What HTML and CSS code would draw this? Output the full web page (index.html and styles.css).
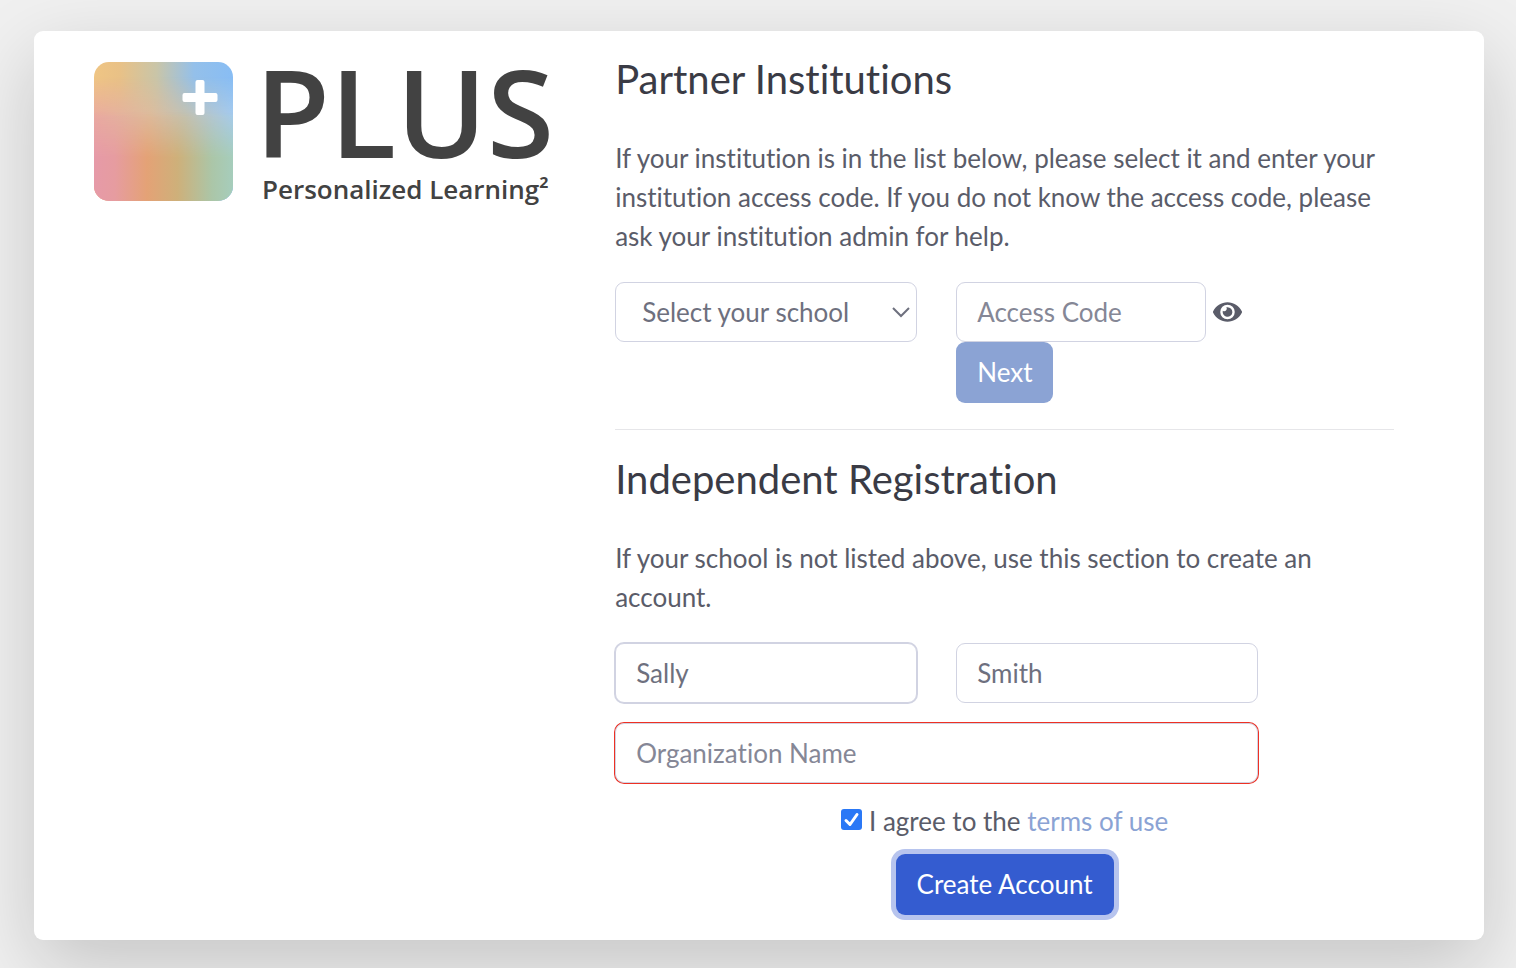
FILE: index.html
```html
<!DOCTYPE html>
<html lang="en">
<head>
<meta charset="utf-8">
<meta name="viewport" content="width=device-width, initial-scale=1">
<title>PLUS – Create Account</title>
<link rel="stylesheet" href="styles.css">
</head>
<body>
<main class="card">
  <div class="brand">
    <svg class="brand-mark" viewBox="0 0 139 139" role="img" aria-label="PLUS logo">
      <defs>
        <linearGradient id="top">
          <stop offset="0" stop-color="#efc584"/>
          <stop offset=".18" stop-color="#e9c186"/>
          <stop offset=".45" stop-color="#c9c5a8"/>
          <stop offset=".72" stop-color="#94c0ea"/>
          <stop offset="1" stop-color="#88bdf4"/>
        </linearGradient>
        <linearGradient id="middle">
          <stop offset="0" stop-color="#eaaaa0"/>
          <stop offset=".4" stop-color="#debb9c"/>
          <stop offset=".65" stop-color="#c5c2b0"/>
          <stop offset="1" stop-color="#a6cbee"/>
        </linearGradient>
        <linearGradient id="bottom">
          <stop offset="0" stop-color="#e69aa8"/>
          <stop offset=".15" stop-color="#e69ca0"/>
          <stop offset=".38" stop-color="#e4a276"/>
          <stop offset=".6" stop-color="#ceb07a"/>
          <stop offset=".85" stop-color="#abc6a8"/>
          <stop offset="1" stop-color="#a6cdbc"/>
        </linearGradient>
        <linearGradient id="fade" x2="0" y2="1">
          <stop offset="0" stop-color="#fff" stop-opacity="0"/>
          <stop offset="1" stop-color="#fff"/>
        </linearGradient>
        <mask id="upper"><rect y="15" width="139" height="40" fill="url(#fade)"/><rect y="55" width="139" height="84" fill="#fff"/></mask>
        <mask id="lower"><rect y="50" width="139" height="45" fill="url(#fade)"/><rect y="95" width="139" height="44" fill="#fff"/></mask>
      </defs>
      <rect width="139" height="139" rx="15" fill="url(#top)"/>
      <rect width="139" height="139" rx="15" fill="url(#middle)" mask="url(#upper)"/>
      <rect width="139" height="139" rx="15" fill="url(#bottom)" mask="url(#lower)"/>
      <path d="M101.500 20a2 2 0 0 1 2-2h5a2 2 0 0 1 2 2v11h11a2 2 0 0 1 2 2v5a2 2 0 0 1-2 2h-11v11a2 2 0 0 1-2 2h-5a2 2 0 0 1-2-2V40h-11a2 2 0 0 1-2-2v-5a2 2 0 0 1 2-2h11z" fill="#fff"/>
    </svg>
    <div class="brand-text">
      <span class="brand-name">PLUS</span>
      <span class="brand-tagline">Personalized Learning²</span>
    </div>
  </div>

  <div class="forms">
    <section class="partner">
      <h1 class="title">Partner Institutions</h1>
      <p class="lead">If your institution is in the list below, please select it and enter your institution access code. If you do not know the access code, please ask your institution admin for help.</p>
      <form class="fields">
        <select class="control school" aria-label="School">
          <option>Select your school</option>
        </select>
        <div class="access">
          <div class="access-row">
            <input class="control code" type="text" placeholder="Access Code" aria-label="Access Code">
            <button class="reveal" type="button" aria-label="Show access code">
              <svg class="eye" viewBox="0 64 576 384" aria-hidden="true"><path d="M572.520 241.400C518.290 135.590 410.930 64 288 64S57.680 135.640 3.480 241.410a32.350 32.350 0 0 0 0 29.190C57.710 376.410 165.070 448 288 448s230.320-71.640 284.520-177.410a32.350 32.350 0 0 0 0-29.190zM288 400a144 144 0 1 1 144-144 143.930 143.930 0 0 1-144 144zm0-240a95.310 95.310 0 0 0-25.310 3.790 47.850 47.850 0 0 1-66.900 66.900A95.780 95.780 0 1 0 288 160z" fill="currentColor"/></svg>
            </button>
          </div>
          <button class="button next" type="button">Next</button>
        </div>
      </form>
    </section>

    <hr class="divider">

    <section class="independent">
      <h2 class="title">Independent Registration</h2>
      <p class="lead">If your school is not listed above, use this section to create an account.</p>
      <form class="fields">
        <input class="control ringed" type="text" value="Sally" aria-label="First Name">
        <input class="control" type="text" value="Smith" aria-label="Last Name">
        <input class="control organization" type="text" placeholder="Organization Name" aria-label="Organization Name">
      </form>
      <div class="submit">
        <div class="agree">
          <input class="check" id="agree" type="checkbox" checked>
          <label for="agree">I agree to the <a class="link" href="#terms">terms of use</a></label>
        </div>
        <button class="button create" type="button">Create Account</button>
      </div>
    </section>
  </div>
</main>
</body>
</html>
```
FILE: styles.css
```css
* {
  box-sizing: border-box;
}

body {
  margin: 0;
  padding: 31px 32px 28px 34px;
  background: #f0f0f0;
  color: #5a5c69;
  font-family: Lato, "Open Sans", sans-serif;
  font-size: 26px;
  font-variant-ligatures: none;
  line-height: 39px;
}

button,
input,
select {
  margin: 0;
  font: inherit;
  font-variant-ligatures: none;
}

.card {
  display: grid;
  grid-template-columns: 2fr 3fr;
  column-gap: 2px;
  padding: 24px 90px 25px 60px;
  border-radius: 9px;
  background: #fff;
  box-shadow: 0 26px 78px rgba(0, 0, 0, 0.18);
}

.brand {
  display: flex;
  align-items: flex-start;
  gap: 22px;
  padding-top: 7px;
  color: #424242;
  font-family: "Open Sans", "Noto Sans", sans-serif;
}

.brand-mark {
  flex: none;
  width: 139px;
  height: 139px;
}

.brand-text {
  display: flex;
  flex-direction: column;
  white-space: nowrap;
}

.brand-name {
  font-size: 122px;
  font-weight: 600;
  line-height: 98px;
}

.brand-tagline {
  padding-left: 7px;
  font-size: 26px;
  font-weight: 600;
  line-height: 58px;
}

.title {
  margin: 0 0 36px;
  color: #3a3b45;
  font-size: 40px;
  font-weight: 400;
  line-height: 48px;
}

.lead {
  margin: 0 0 26px;
}

.fields {
  display: grid;
  grid-template-columns: 302px 302px;
  gap: 20px 39px;
}

.control {
  width: 100%;
  height: 60px;
  padding: 0 20px;
  border: 1px solid #d1d3e2;
  border-radius: 9px;
  background: #fff;
  color: #6e707e;
}

.control::placeholder {
  color: #858796;
  opacity: 1;
}

.school {
  padding: 0 26px;
  appearance: none;
  background: url("data:image/svg+xml,%3Csvg xmlns='http://www.w3.org/2000/svg' width='18' height='11' fill='none' stroke='%236e707e' stroke-width='2'%3E%3Cpath d='M1 1l8 8 8-8'/%3E%3C/svg%3E") no-repeat right 6px center;
}

.access-row {
  display: flex;
  gap: 7px;
}

.code {
  width: 250px;
}

.reveal {
  padding: 0;
  border: 0;
  background: none;
  color: #5a5c69;
}

.eye {
  display: block;
  width: 29px;
  height: 20px;
}

.button {
  height: 61px;
  padding: 0 21px;
  border: 0;
  border-radius: 9px;
  color: #fff;
}

.next {
  display: block;
  background: #8ba3d4;
}

.divider {
  margin: 26px 0 25px;
  border: 0;
  border-top: 1px solid #e6e6e9;
}

.ringed {
  box-shadow: 0 0 0 1px #d1d3e2;
}

.organization {
  grid-column: 1 / -1;
  box-shadow: 0 0 0 1px #ee3124;
}

.submit {
  display: flex;
  flex-direction: column;
  align-items: center;
  gap: 13px;
  padding-top: 19px;
}

.agree {
  display: flex;
  align-items: flex-start;
  gap: 7px;
}

.check {
  appearance: none;
  width: 21px;
  height: 21px;
  margin-top: 7px;
  border-radius: 3px;
  background: #2a78f6 url("data:image/svg+xml,%3Csvg xmlns='http://www.w3.org/2000/svg' width='21' height='21' fill='none' stroke='white' stroke-width='3' stroke-linecap='round' stroke-linejoin='round'%3E%3Cpath d='M5 11.500l4 4L16 5.500'/%3E%3C/svg%3E") no-repeat center;
}

.link {
  color: #8ba3d4;
  text-decoration: none;
}

.create {
  background: #345cd0;
  box-shadow: 0 0 0 5px #b7c4ee;
}
```
